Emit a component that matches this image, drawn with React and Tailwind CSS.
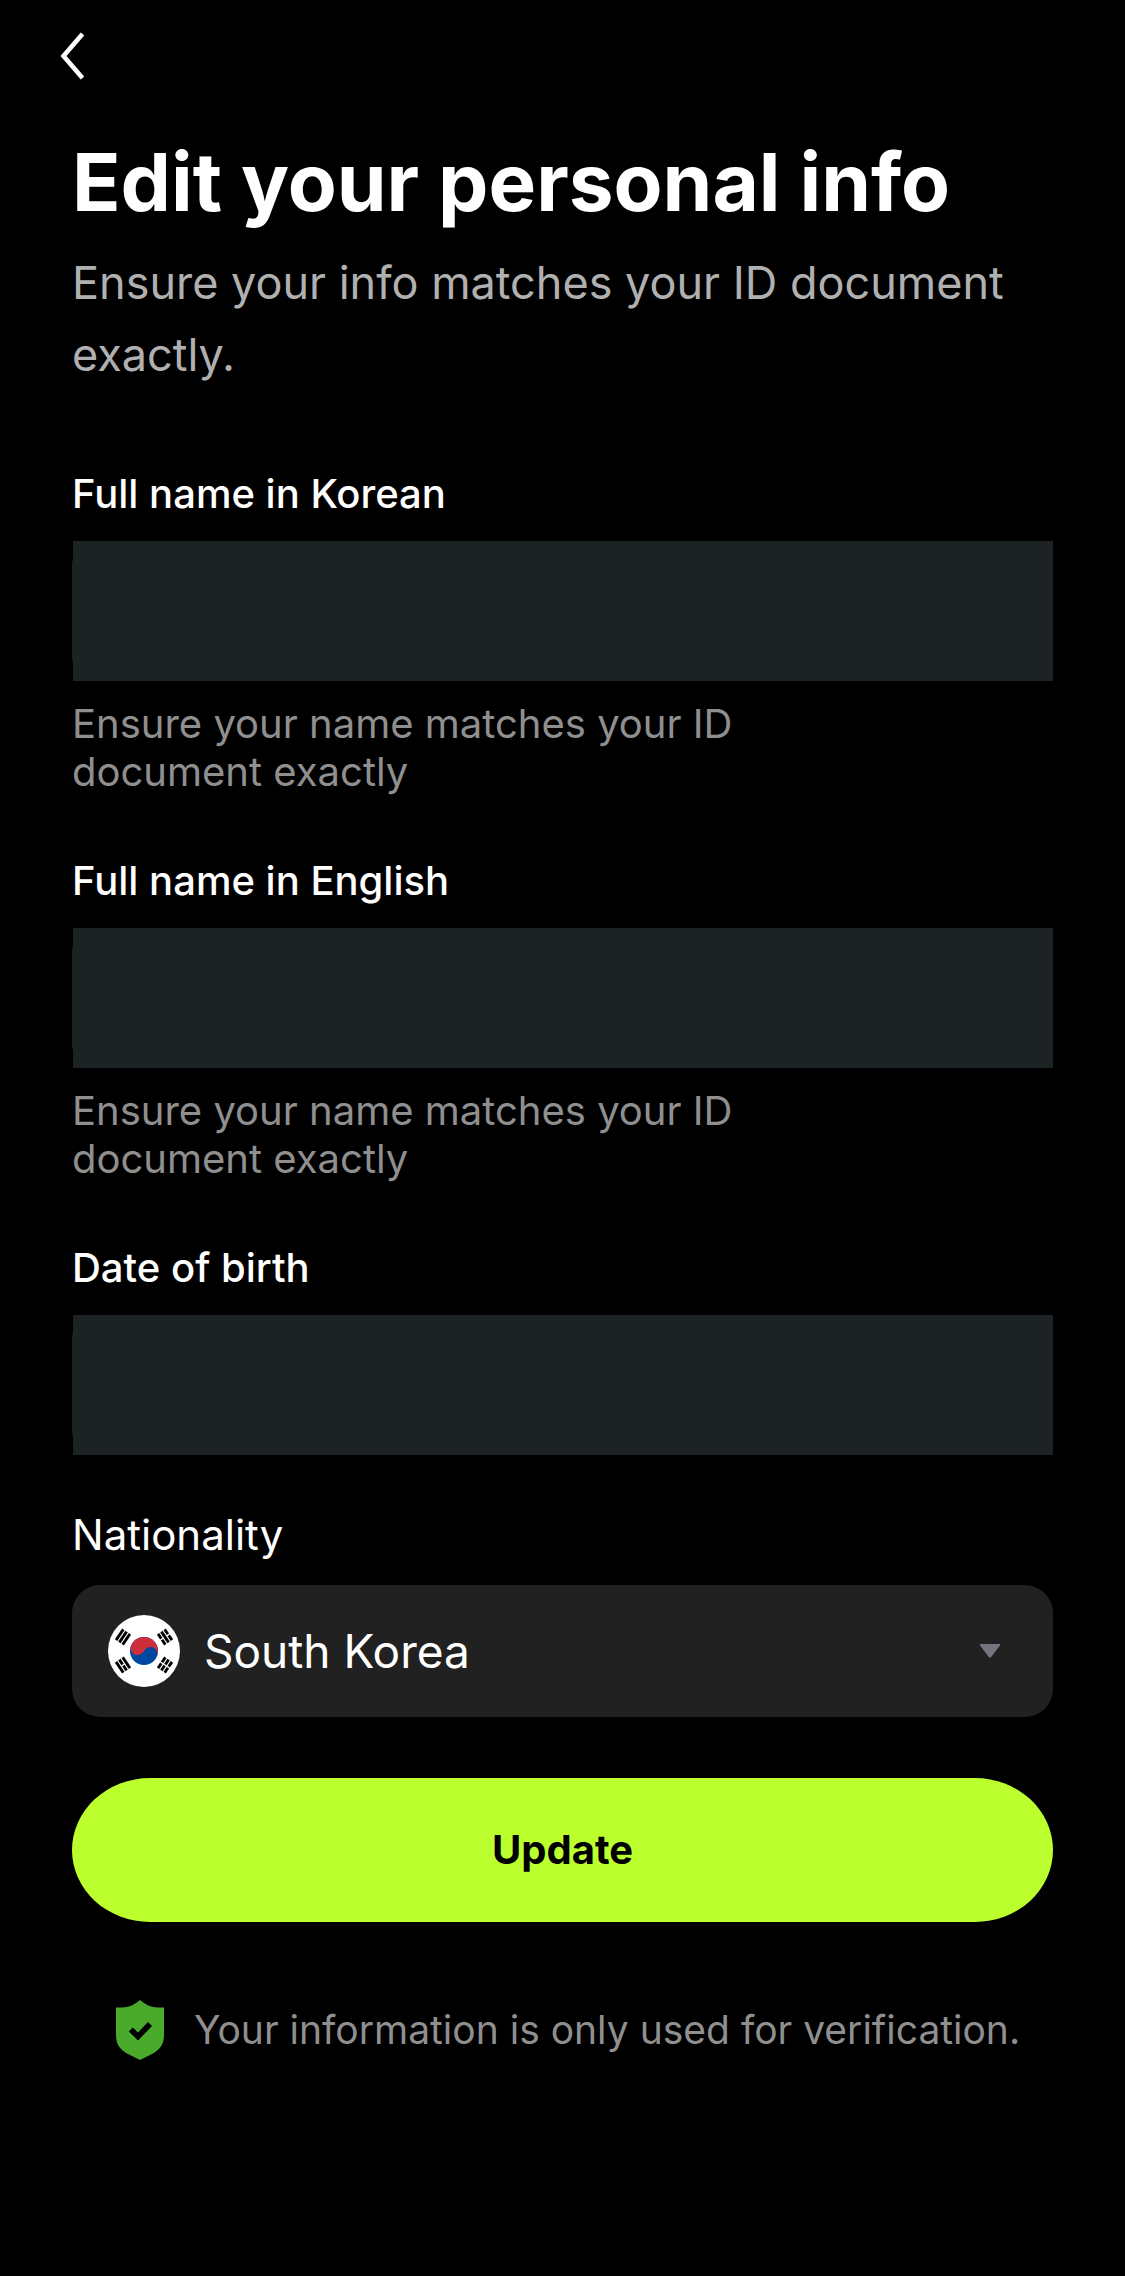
import React from "react";

function BackIcon() {
  return (
    <svg viewBox="0 0 24 48" className="h-12 w-6" fill="none" stroke="currentColor" strokeWidth="4.600" aria-hidden="true">
      <path d="M22.500 2 L3.500 24 L22.500 46" />
    </svg>
  );
}

function Trigram({ x, y, angle, broken }) {
  return (
    <g transform={`translate(${x} ${y}) rotate(${angle})`} stroke="#000" strokeWidth="2.8">
      {[-4, 0, 4].map((offset, i) => (
        <path
          key={offset}
          d={broken[i] ? `M-6.5 ${offset}H-0.7M0.7 ${offset}H6.5` : `M-6.5 ${offset}H6.5`}
        />
      ))}
    </g>
  );
}

function KoreaFlag({ className }) {
  return (
    <svg viewBox="0 0 72 72" className={className} aria-hidden="true">
      <circle cx="36" cy="36" r="36" fill="#fff" />
      <circle cx="36" cy="36" r="14" fill="#0047a0" />
      <path
        d="M22 36a14 14 0 0 1 28 0a7 7 0 0 0-14 0a7 7 0 0 1-14 0z"
        fill="#cd2e3a"
        transform="rotate(25 36 36)"
      />
      <Trigram x={15} y={22} angle={-56} broken={[false, false, false]} />
      <Trigram x={57} y={22} angle={56} broken={[true, false, true]} />
      <Trigram x={15} y={50} angle={56} broken={[false, true, false]} />
      <Trigram x={57} y={50} angle={-56} broken={[true, true, true]} />
    </svg>
  );
}

function ShieldIcon() {
  return (
    <svg viewBox="0 0 48 60" className="h-[60px] w-12 shrink-0" aria-hidden="true">
      <path
        d="M24 0C29 4.500 35 7.500 42 7.500H48V35C48 45 43.500 50 36 54L24 60L12 54C4.500 50 0 45 0 35V7.500H6C13 7.500 19 4.500 24 0Z"
        fill="#4aaa2c"
      />
      <path d="M14.800 29.500L22 36.500L34 24" fill="none" stroke="#000" strokeWidth="5.600" />
    </svg>
  );
}

function Field({ id, label, helper }) {
  return (
    <div>
      <label htmlFor={id} className="block text-[40px] leading-[48px] font-medium">
        {label}
      </label>
      <div className="mt-[23px] rounded-3xl bg-[#212121] pl-px">
        <input
          id={id}
          type="text"
          className="block h-[140px] w-full bg-[#1d2225] px-9 text-[46px] text-white outline-none"
        />
      </div>
      {helper && (
        <p className="mt-[19px] max-w-[700px] text-[40px] leading-[48px] text-[#8f8f8f]">{helper}</p>
      )}
    </div>
  );
}

export default function App() {
  return (
    <div className="min-h-screen bg-black font-['Inter','Liberation_Sans',sans-serif] text-white">
      <header className="flex h-28 items-center px-[60px]">
        <button type="button" aria-label="Back">
          <BackIcon />
        </button>
      </header>
      <main className="px-[72px] pt-[22px] pb-20">
        <h1 className="text-[80px] leading-[96px] font-bold">Edit your personal info</h1>
        <p className="mt-[17px] text-[45px] leading-[72px] text-[#b0b0b0]">
          Ensure your info matches your ID document exactly.
        </p>
        <form onSubmit={(e) => e.preventDefault()}>
          <div className="mt-[79px] flex flex-col gap-[61px]">
            <Field id="name-ko" label="Full name in Korean" helper="Ensure your name matches your ID document exactly" />
            <Field id="name-en" label="Full name in English" helper="Ensure your name matches your ID document exactly" />
            <Field id="birth" label="Date of birth" />
          </div>
          <label htmlFor="nationality" className="mt-[54px] block text-[42px] leading-[52px]">
            Nationality
          </label>
          <div className="relative mt-6">
            <select
              id="nationality"
              defaultValue="kr"
              className="block h-[132px] w-full appearance-none rounded-[28px] bg-[#212121] pr-24 pl-[132px] text-[46px] text-white"
            >
              <option value="kr">South Korea</option>
            </select>
            <div className="pointer-events-none absolute inset-0 flex items-center justify-between pr-[53px] pl-9">
              <KoreaFlag className="size-[72px]" />
              <svg viewBox="0 0 20 14" className="h-[14px] w-5" aria-hidden="true">
                <path d="M0 0H20V1.500L10.800 13.500H9.200L0 1.500Z" fill="#76737f" />
              </svg>
            </div>
          </div>
          <button
            type="submit"
            className="mt-[61px] block h-36 w-full rounded-[78px/72px] bg-[#bcff2f] text-[40px] font-bold text-black"
          >
            Update
          </button>
        </form>
        <div className="mt-[78px] flex items-center gap-[30px] pl-11">
          <ShieldIcon />
          <p className="text-[39px] leading-[52px] text-[#8f8f8f]">Your information is only used for verification.</p>
        </div>
      </main>
    </div>
  );
}
